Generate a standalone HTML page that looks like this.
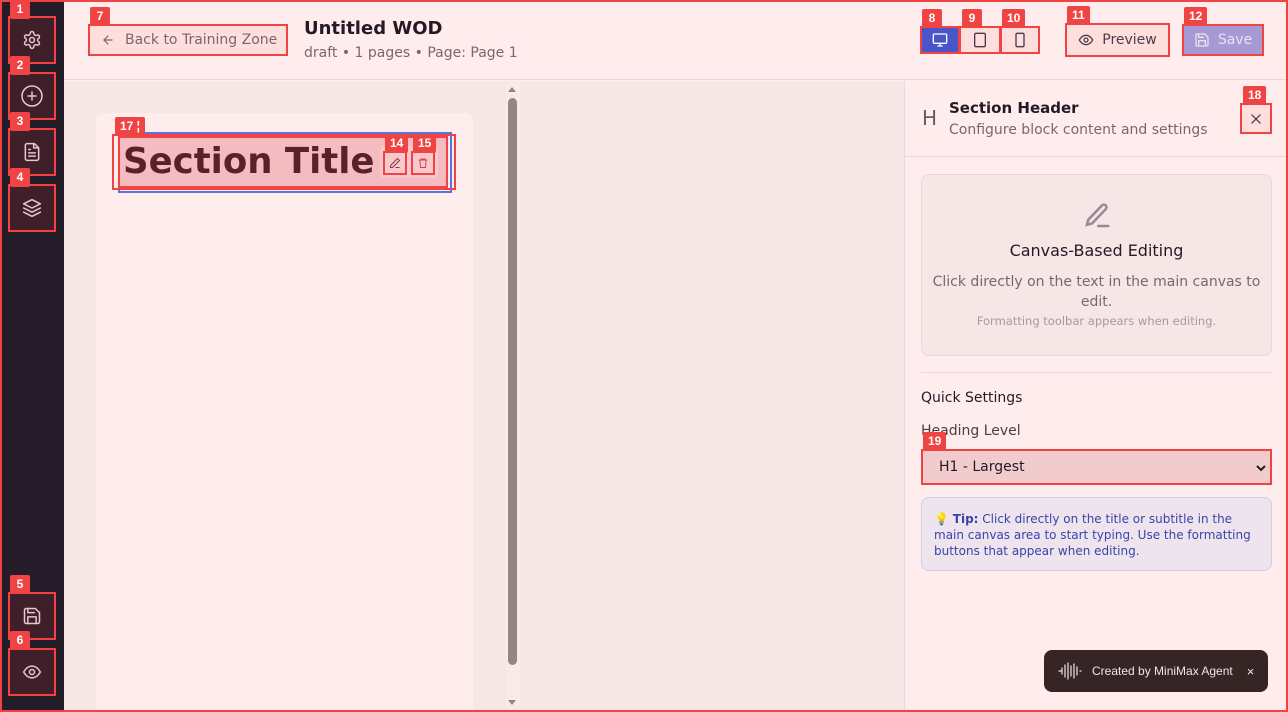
<!DOCTYPE html>
<html><head><meta charset="utf-8"><style>
*{box-sizing:border-box;margin:0;padding:0}
html,body{width:1288px;height:712px;overflow:hidden}
body{position:relative;background:#ffecec;font-family:"DejaVu Sans","Liberation Sans",sans-serif;}
.a{position:absolute}
.rb{position:absolute;border:2px solid #f04444}
.lb{position:absolute;background:#f04444;color:#fff;font:bold 12px "Liberation Sans",sans-serif;height:19px;min-width:20px;padding:0 5px;line-height:19px;text-align:center;border-radius:2px}
.sb{position:absolute;left:8px;width:48px;height:48px;background:#3f1f2a;border:2px solid #f04444;display:flex;align-items:center;justify-content:center}
svg{display:block}
</style></head><body>
<div class="a" style="left:0;top:0;width:64px;height:712px;background:#241c28"></div>
<div class="sb" style="top:16px"><svg width="20" height="20" viewBox="0 0 24 24" fill="none" stroke="#e8c8cc" stroke-width="1.8" stroke-linecap="round" stroke-linejoin="round"><path d="M12.2 2h-.4a2 2 0 0 0-2 2v.2a2 2 0 0 1-1 1.7l-.4.3a2 2 0 0 1-2 0l-.2-.1a2 2 0 0 0-2.7.7l-.2.4a2 2 0 0 0 .7 2.7l.2.1a2 2 0 0 1 1 1.7v.5a2 2 0 0 1-1 1.7l-.2.1a2 2 0 0 0-.7 2.7l.2.4a2 2 0 0 0 2.7.7l.2-.1a2 2 0 0 1 2 0l.4.3a2 2 0 0 1 1 1.7V20a2 2 0 0 0 2 2h.4a2 2 0 0 0 2-2v-.2a2 2 0 0 1 1-1.7l.4-.3a2 2 0 0 1 2 0l.2.1a2 2 0 0 0 2.7-.7l.2-.4a2 2 0 0 0-.7-2.7l-.2-.1a2 2 0 0 1-1-1.7v-.5a2 2 0 0 1 1-1.7l.2-.1a2 2 0 0 0 .7-2.7l-.2-.4a2 2 0 0 0-2.7-.7l-.2.1a2 2 0 0 1-2 0l-.4-.3a2 2 0 0 1-1-1.7V4a2 2 0 0 0-2-2z"/><circle cx="12" cy="12" r="3"/></svg></div>
<div class="sb" style="top:72px"><svg width="24" height="24" viewBox="0 0 24 24" fill="none" stroke="#e8c8cc" stroke-width="1.5" stroke-linecap="round"><circle cx="12" cy="12" r="10"/><path d="M12 8v8M8 12h8"/></svg></div>
<div class="sb" style="top:128px"><svg width="20" height="20" viewBox="0 0 24 24" fill="none" stroke="#e8c8cc" stroke-width="1.8" stroke-linecap="round" stroke-linejoin="round"><path d="M15 2H6a2 2 0 0 0-2 2v16a2 2 0 0 0 2 2h12a2 2 0 0 0 2-2V7z"/><path d="M14 2v5h5M16 13H8M16 17H8M10 9H8"/></svg></div>
<div class="sb" style="top:184px"><svg width="20" height="20" viewBox="0 0 24 24" fill="none" stroke="#e8c8cc" stroke-width="1.8" stroke-linecap="round" stroke-linejoin="round"><path d="M12 2 2 7l10 5 10-5z"/><path d="m2 17 10 5 10-5M2 12l10 5 10-5"/></svg></div>
<div class="sb" style="top:592px"><svg width="20" height="20" viewBox="0 0 24 24" fill="none" stroke="#e8c8cc" stroke-width="1.8" stroke-linecap="round" stroke-linejoin="round"><path d="M19 21H5a2 2 0 0 1-2-2V5a2 2 0 0 1 2-2h11l5 5v11a2 2 0 0 1-2 2z"/><path d="M17 21v-8H7v8M7 3v5h8"/></svg></div>
<div class="sb" style="top:648px"><svg width="20" height="20" viewBox="0 0 24 24" fill="none" stroke="#e8c8cc" stroke-width="1.8"><path d="M2 12s3.5-7 10-7 10 7 10 7-3.5 7-10 7S2 12 2 12z"/><circle cx="12" cy="12" r="3"/></svg></div>
<div class="lb" style="left:10px;top:0">1</div>
<div class="lb" style="left:10px;top:56px">2</div>
<div class="lb" style="left:10px;top:112px">3</div>
<div class="lb" style="left:10px;top:168px">4</div>
<div class="lb" style="left:10px;top:575px">5</div>
<div class="lb" style="left:10px;top:631px">6</div>

<div class="a" style="left:64px;top:0;width:1224px;height:80px;background:#ffecec;border-bottom:1px solid #ecd8dc"></div>
<div class="rb" style="left:88px;top:24px;width:200px;height:32px;background:#ffdede;padding-left:11px;display:flex;align-items:center;font-size:14px;color:#7a6670"><svg width="14" height="14" viewBox="0 0 24 24" fill="none" stroke="#7a6670" stroke-width="2" stroke-linecap="round" style="margin-right:10px"><path d="M19 12H5M12 19l-7-7 7-7"/></svg>Back to Training Zone</div>
<div class="lb" style="left:90px;top:7px">7</div>
<div class="a" style="left:304px;top:18px;font-size:18px;font-weight:bold;color:#241a26">Untitled WOD</div>
<div class="a" style="left:304px;top:45px;font-size:14px;color:#7a6670">draft • 1 pages • Page: Page 1</div>

<div class="rb" style="left:920px;top:26px;width:40px;height:28px;background:#4a56c8;display:flex;align-items:center;justify-content:center"><svg width="16" height="16" viewBox="0 0 24 24" fill="none" stroke="#fff" stroke-width="2"><rect x="2" y="3" width="20" height="14" rx="2"/><path d="M8 21h8M12 17v4"/></svg></div>
<div class="rb" style="left:959px;top:26px;width:42px;height:28px;background:#ffdede;display:flex;align-items:center;justify-content:center"><svg width="16" height="16" viewBox="0 0 24 24" fill="none" stroke="#4a3c48" stroke-width="2"><rect x="4" y="2" width="16" height="20" rx="2"/><path d="M12 18h.01"/></svg></div>
<div class="rb" style="left:1000px;top:26px;width:40px;height:28px;background:#ffdede;display:flex;align-items:center;justify-content:center"><svg width="16" height="16" viewBox="0 0 24 24" fill="none" stroke="#4a3c48" stroke-width="2"><rect x="6" y="2" width="12" height="20" rx="2"/><path d="M12 18h.01"/></svg></div>
<div class="lb" style="left:922px;top:9px">8</div>
<div class="lb" style="left:962px;top:9px">9</div>
<div class="lb" style="left:1002px;top:9px">10</div>
<div class="rb" style="left:1065px;top:23px;width:105px;height:34px;background:#ffdede;display:flex;align-items:center;justify-content:center;font-size:14px;color:#4a3c48"><svg width="16" height="16" viewBox="0 0 24 24" fill="none" stroke="#4a3c48" stroke-width="2" style="margin-right:8px"><path d="M2 12s3.5-7 10-7 10 7 10 7-3.5 7-10 7S2 12 2 12z"/><circle cx="12" cy="12" r="3"/></svg>Preview</div>
<div class="lb" style="left:1067px;top:6px">11</div>
<div class="rb" style="left:1182px;top:24px;width:82px;height:32px;background:#a69ad4;display:flex;align-items:center;justify-content:center;font-size:14px;color:#ece0f0"><svg width="16" height="16" viewBox="0 0 24 24" fill="none" stroke="#ece0f0" stroke-width="2" style="margin-right:8px"><path d="M19 21H5a2 2 0 0 1-2-2V5a2 2 0 0 1 2-2h11l5 5v11a2 2 0 0 1-2 2z"/><path d="M17 21v-8H7v8M7 3v5h8"/></svg>Save</div>
<div class="lb" style="left:1184px;top:7px">12</div>

<div class="a" style="left:64px;top:81px;width:840px;height:631px;background:#f7e6e6"></div>
<div class="a" style="left:96px;top:113px;width:377px;height:610px;background:#ffecec;border-radius:8px"></div>
<div class="a" style="left:506px;top:81px;width:14px;height:631px;background:#f9eaea"></div>
<div class="a" style="left:508px;top:98px;width:9px;height:567px;background:#968585;border-radius:5px"></div>
<div class="a" style="left:508px;top:87px;width:0;height:0;border:4px solid transparent;border-bottom:5px solid #968585;border-top:0"></div>
<div class="a" style="left:508px;top:700px;width:0;height:0;border:4px solid transparent;border-top:5px solid #968585;border-bottom:0"></div>

<div class="a" style="left:118px;top:132px;width:334px;height:61px;border:2px solid #5577dd"></div>
<div class="rb" style="left:112px;top:134px;width:344px;height:56px"></div>
<div class="rb" style="left:118px;top:136px;width:330px;height:52px;background:#f4bcc0"></div>
<div class="a" style="left:123px;top:140px;font-size:35.5px;font-weight:bold;color:#5c1f2c;line-height:44px;white-space:nowrap">Section Title</div>
<div class="a" style="left:380px;top:146px;width:58px;height:32px;background:#f8c8cc;border-radius:4px"></div>
<div class="rb" style="left:383px;top:151px;width:24px;height:24px;display:flex;align-items:center;justify-content:center"><svg width="12" height="12" viewBox="0 0 24 24" fill="none" stroke="#8a3a44" stroke-width="2"><path d="M17 3l4 4L7 21H3v-4zM13 21h8"/></svg></div>
<div class="rb" style="left:411px;top:151px;width:24px;height:24px;display:flex;align-items:center;justify-content:center"><svg width="12" height="12" viewBox="0 0 24 24" fill="none" stroke="#e04050" stroke-width="2"><path d="M3 6h18M8 6V4h8v2M6 6l1 15h10l1-15"/></svg></div>
<div class="lb" style="left:385px;top:134px">14</div>
<div class="lb" style="left:413px;top:134px">15</div>
<div class="lb" style="left:115px;top:117px">17 ¦</div>

<div class="a" style="left:904px;top:81px;width:384px;height:631px;background:#ffecec;border-left:1px solid #ecd8dc"></div>
<div class="a" style="left:905px;top:81px;width:383px;height:76px;border-bottom:1px solid #ecd8dc"></div>
<div class="a" style="left:922px;top:106px;font-size:20px;color:#6a5a66">H</div>
<div class="a" style="left:949px;top:99px;font-size:15px;font-weight:bold;color:#241a26">Section Header</div>
<div class="a" style="left:949px;top:122px;font-size:14px;color:#7a6670">Configure block content and settings</div>
<div class="rb" style="left:1240px;top:103px;width:32px;height:31px;background:#ffdede;display:flex;align-items:center;justify-content:center"><svg width="14" height="14" viewBox="0 0 24 24" fill="none" stroke="#4a3c48" stroke-width="2.2" stroke-linecap="round"><path d="M5 5l14 14M19 5 5 19"/></svg></div>
<div class="lb" style="left:1243px;top:86px">18</div>

<div class="a" style="left:921px;top:174px;width:351px;height:182px;background:#f7e6e6;border:1px solid #ecd6da;border-radius:8px;text-align:center">
<svg style="margin:26px auto 0" width="30" height="30" viewBox="0 0 24 24" fill="none" stroke="#968a94" stroke-width="2" stroke-linecap="round"><path d="M16 3.5a2 2 0 0 1 3 3L8 18l-4 1 1-4z M13 20h8"/></svg>
<div style="margin-top:10px;font-size:16px;color:#241a26">Canvas-Based Editing</div>
<div style="margin-top:12px;font-size:14px;line-height:20px;color:#7a6670;padding:0 10px">Click directly on the text in the main canvas to edit.</div>
<div style="margin-top:2px;font-size:11.5px;color:#a898a2">Formatting toolbar appears when editing.</div>
</div>
<div class="a" style="left:921px;top:372px;width:351px;height:1px;background:#ecd6da"></div>
<div class="a" style="left:921px;top:390px;font-size:14px;color:#241a26">Quick Settings</div>
<div class="a" style="left:921px;top:423px;font-size:14px;color:#4a3c48">Heading Level</div>
<div class="rb" style="left:921px;top:449px;width:351px;height:36px;background:#f2cccc;padding-left:16px;display:flex;align-items:center;font-size:14px;color:#241a26">H1 - Largest<svg style="position:absolute;right:4px;top:12px" width="10" height="10" viewBox="0 0 10 10"><path d="M1 3l4 4 4-4" fill="none" stroke="#241a26" stroke-width="2"/></svg></div>
<div class="lb" style="left:923px;top:432px">19</div>
<div class="a" style="left:921px;top:497px;width:351px;height:74px;background:#ede4ee;border:1px solid #cad0ee;border-radius:8px;padding:13px 12px;font-size:12px;line-height:16px;color:#3a44a8">💡 <b>Tip:</b> Click directly on the title or subtitle in the main canvas area to start typing. Use the formatting buttons that appear when editing.</div>

<div class="a" style="left:1044px;top:650px;width:224px;height:42px;background:#372526;border-radius:8px;display:flex;align-items:center;padding-left:14px;font-family:'Liberation Sans',sans-serif;font-size:12px;color:#f0e4e4">
<svg width="24" height="20" viewBox="0 0 24 20" fill="none" stroke="#f0e4e4" stroke-width="1.2" stroke-linecap="round"><path d="M1 10h2M4 7v6M7 4v12M10 2v16M13 5v10M16 3v14M19 6v8M22 10h1"/></svg>
<span style="margin-left:10px">Created by MiniMax Agent</span><span style="margin-left:14px;font-size:13px">×</span></div>

<div class="a" style="left:0;top:0;width:1288px;height:712px;border:2px solid #f04444;pointer-events:none"></div>
</body></html>
